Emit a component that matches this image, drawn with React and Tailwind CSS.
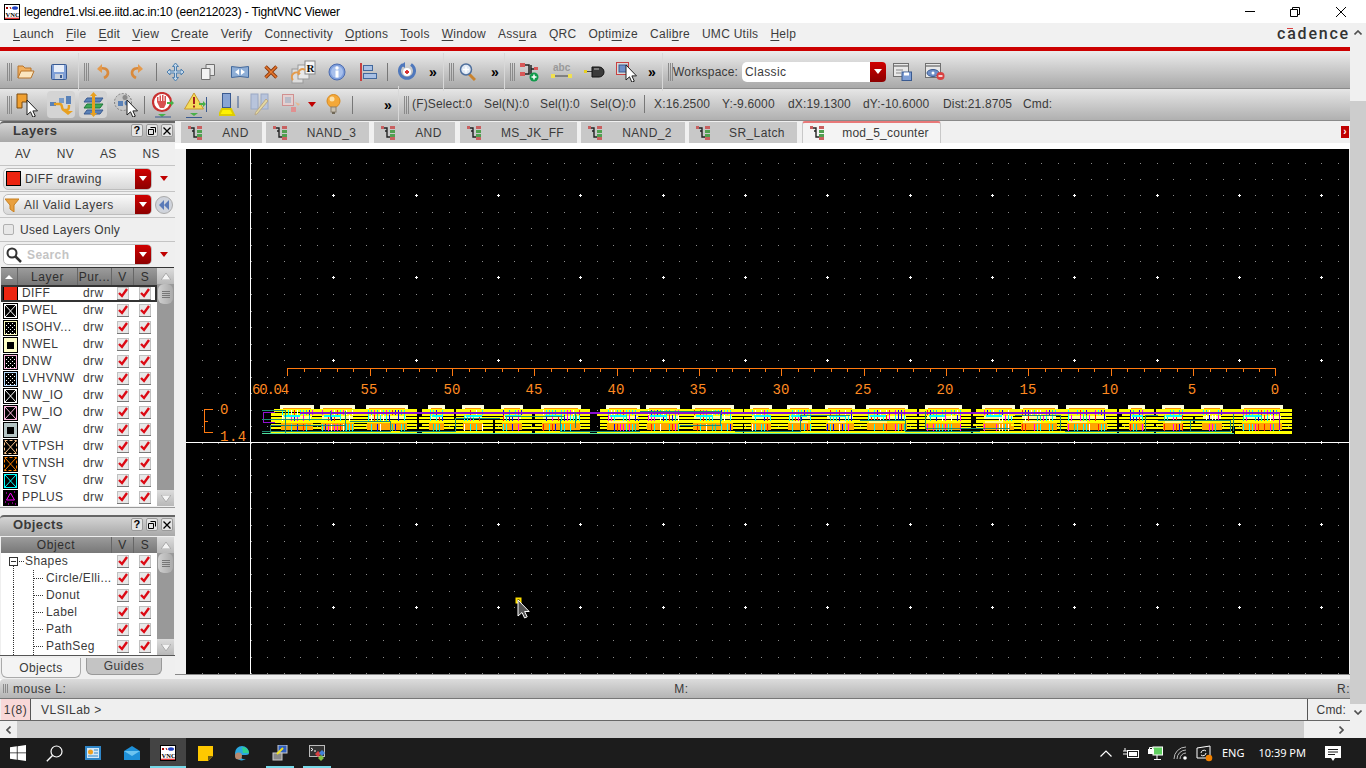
import React from "react";

const Svg = ({ w, h = 20, className = "", children }) => (
  <svg width={w} height={h} viewBox={`0 0 ${w} ${h}`} className={`shrink-0 ${className}`}>
    {children}
  </svg>
);

const Arrow = ({ x = 0, y = 0 }) => (
  <path transform={`translate(${x} ${y})`} d="M0 0v15l3.5-3.2 2.4 5.4 2.4-1-2.4-5.3h4.6z" fill="#fff" stroke="#222" strokeWidth="1" />
);

/* toolbar one */
const Folder = ({ className }) => (
  <Svg w={18} h={16} className={className}>
    <path d="M1 14V2h5l2 2h6v3" fill="#f0b060" stroke="#b8752c" />
    <path d="M1 14l3-7h13l-3 7z" fill="#fbe6c0" stroke="#b8752c" />
  </Svg>
);
const Save = ({ className }) => (
  <Svg w={16} h={16} className={className}>
    <rect x=".5" y=".5" width="15" height="15" rx="1" fill="#7f9fd6" stroke="#3a5a90" />
    <rect x="3" y="1" width="10" height="7" fill="#e8eef8" />
    <rect x="4" y="10" width="8" height="5" fill="#c8d0dc" />
    <rect x="9" y="11" width="2" height="3" fill="#3a5a90" />
  </Svg>
);
const Undo = ({ className, flip }) => (
  <Svg w={13} h={16} className={className}>
    <g transform={flip ? "translate(13 0) scale(-1 1)" : ""}>
      <path d="M2 5c5-2 9 0 9 4 0 2-2 4-4 5" fill="none" stroke="#d98a3c" strokeWidth="2.6" />
      <path d="M5 0v9L0 5z" fill="#e59a4c" />
    </g>
  </Svg>
);
const Move = ({ className }) => (
  <Svg w={19} h={20} className={className}>
    <path d="M9.5 1l3 3.5h-2V9h4.5V7l3 3-3 3v-2h-4.500v4.500h2l-3 3.500-3-3.500h2V11H4v2l-3-3 3-3v2h4.500V4.500h-2z" fill="#c4d8ea" stroke="#4d7fae" />
  </Svg>
);
const Copy = ({ className }) => (
  <Svg w={14} h={16} className={className}>
    <path d="M5 .5h8.500v11H5z" fill="#e6e6e6" stroke="#707070" />
    <path d="M.5 4.500H9v11H.5z" fill="#f2f2f2" stroke="#707070" />
  </Svg>
);
const Stretch = ({ className }) => (
  <Svg w={18} h={14} className={className}>
    <path d="M.5 1.500Q9 3.500 17.500 1.500v11Q9 10.500.5 12.500z" fill="#8eaed6" stroke="#42689c" />
    <path d="M8 4v6L4 7zM10 4v6l4-3z" fill="#fff" />
  </Svg>
);
const Del = ({ className }) => (
  <Svg w={14} h={14} className={className}>
    <path d="M1.500 1.500l11 11M12.500 1.500l-11 11" stroke="#8a3a10" strokeWidth="3.400" />
    <path d="M1.500 1.500l11 11M12.500 1.500l-11 11" stroke="#e8782c" strokeWidth="1.500" />
  </Svg>
);
const Prop = ({ className }) => (
  <Svg w={25} h={24} className={className}>
    <rect x="1" y="9" width="11" height="14" fill="#ddd" stroke="#999" />
    <rect x="7" y="5" width="11" height="14" fill="#e8e8e8" stroke="#999" />
    <rect x="14" y="1" width="10" height="13" fill="#f6f6f6" stroke="#888" />
    <text x="15.500" y="12" fontSize="11" fontWeight="700" fontFamily="Liberation Serif, serif" fill="#111">R</text>
    <path d="M2 20a4 4 0 017-6M8 15a4 4 0 016-5" fill="none" stroke="#e39a4a" strokeWidth="2" />
  </Svg>
);
const Info = ({ className }) => (
  <Svg w={18} h={18} className={className}>
    <circle cx="9" cy="9" r="8" fill="#7f9fdc" stroke="#4c6cb0" />
    <circle cx="9" cy="9" r="6" fill="#a8c0ec" />
    <rect x="7.500" y="7.500" width="3" height="7" fill="#fff" />
    <circle cx="9" cy="5" r="1.700" fill="#fff" />
  </Svg>
);
const Align = ({ className }) => (
  <Svg w={17} h={20} className={className}>
    <rect x="0" y="1" width="2" height="18" fill="#c84040" />
    <rect x="3.500" y="3.500" width="9" height="5" fill="#a8c0e4" stroke="#42689c" />
    <rect x="3.500" y="11.500" width="13" height="5" fill="#a8c0e4" stroke="#42689c" />
  </Svg>
);
const Refresh = ({ className }) => (
  <Svg w={18} h={19} className={className}>
    <path d="M5 2.500a7.500 7.500 0 108 0" fill="none" stroke="#4f78bc" strokeWidth="3" />
    <path d="M7 0v6L3 3z" fill="#4f78bc" />
    <circle cx="9" cy="10" r="4" fill="#fff" />
    <path d="M7 10h4M9 8v4" stroke="#d83030" strokeWidth="1.800" />
  </Svg>
);
const Zoom = ({ className }) => (
  <Svg w={17} h={19} className={className}>
    <path d="M10 12l6 6" stroke="#c9832e" strokeWidth="3" />
    <circle cx="7" cy="7.500" r="5.500" fill="#dfe8f4" stroke="#4f6f9c" strokeWidth="1.500" />
    <path d="M4 7.500h6M7 4.500v6" stroke="#fff" strokeWidth="1.500" />
  </Svg>
);
const CreateInst = ({ className }) => (
  <Svg w={20} h={20} className={className}>
    <rect x="1" y="1" width="5" height="4" fill="#d85858" />
    <rect x="1" y="10" width="5" height="4" fill="#d85858" />
    <path d="M6 3h4v9H6M10 3v9M12 3v9M12 7h4" fill="none" stroke="#222" strokeWidth="1.500" />
    <rect x="15" y="5" width="4" height="3" fill="#d85858" />
    <circle cx="15" cy="15" r="4.500" fill="#119b4c" />
    <path d="M12.500 15h5M15 12.500v5" stroke="#fff" strokeWidth="1.500" />
  </Svg>
);
const Abc = ({ className }) => (
  <Svg w={21} h={20} className={className}>
    <text x="2" y="9" fontSize="10" fontWeight="700" fontFamily="Liberation Sans, sans-serif" fill="#999">abc</text>
    <path d="M2 14h17" stroke="#444" />
    <rect x="0" y="12" width="4" height="4" fill="#f0e050" />
    <rect x="17" y="12" width="4" height="4" fill="#f0e050" />
  </Svg>
);
const Pin = ({ className }) => (
  <Svg w={21} h={12} className={className}>
    <rect x="0" y="4" width="3" height="3" fill="#e8d020" />
    <path d="M3 5.500h5" stroke="#444" />
    <path d="M8 1h7a5 5 0 010 10H8z" fill="#3a3a3a" stroke="#111" />
    <path d="M10 3h5" stroke="#bbb" />
  </Svg>
);
const SelectBox = ({ className }) => (
  <Svg w={21} h={20} className={className}>
    <rect x=".5" y=".5" width="12" height="12" fill="#d8d8d8" stroke="#c84040" />
    <rect x="3" y="3" width="8" height="7" fill="#6f8fc8" stroke="#3a5a90" />
    <Arrow x={10} y={3} />
  </Svg>
);
const WinSave = ({ className }) => (
  <Svg w={19} h={18} className={className}>
    <rect x=".5" y=".5" width="15" height="13" fill="#e8e8e8" stroke="#707070" />
    <path d="M1 3h14" stroke="#9a9a9a" strokeWidth="2" />
    <path d="M3 7h7M3 10h5" stroke="#888" />
    <rect x="9" y="9" width="9.500" height="8.500" fill="#7f9fd6" stroke="#3a5a90" />
    <rect x="11" y="9.500" width="5" height="3" fill="#fff" />
  </Svg>
);
const WinEye = ({ className }) => (
  <Svg w={20} h={18} className={className}>
    <rect x=".5" y=".5" width="15" height="14" fill="#e8e8e8" stroke="#707070" />
    <path d="M1 3h14" stroke="#9a9a9a" strokeWidth="2" />
    <ellipse cx="8" cy="10" rx="6" ry="3.500" fill="#6f8fc8" stroke="#3a5a90" />
    <circle cx="8" cy="10" r="1.500" fill="#fff" />
    <circle cx="15.500" cy="13" r="4" fill="#d84040" />
    <path d="M13.500 13h4" stroke="#fff" strokeWidth="1.500" />
  </Svg>
);

/* toolbar two */
const LShape = ({ className }) => (
  <Svg w={23} h={24} className={className}>
    <path d="M1 1h10v8h-5v6H1z" fill="#f0a030" stroke="#7a4a10" />
    <Arrow x={11} y={7} />
  </Svg>
);
const RouteIcon = ({ className }) => (
  <Svg w={23} h={22} className={className}>
    <rect x="0" y="8" width="6" height="4" fill="#5a82b8" />
    <rect x="16" y="2" width="5" height="8" fill="#5a82b8" />
    <rect x="9" y="4" width="5" height="5" fill="#7a9cc8" />
    <path d="M4 10h6c3 0 1 6 4 6h3c2 0 2-3 2-5" fill="none" stroke="#e8a020" strokeWidth="2.500" />
    <path d="M13 17l5 4 5-4z" fill="#e8a020" />
  </Svg>
);
const StackIcon = ({ className }) => (
  <Svg w={23} h={25} className={className}>
    <path d="M5 6h16l-3 4H2z" fill="#5a82b8" stroke="#3a5a90" />
    <path d="M5 12h16l-3 4H2z" fill="#3ea858" stroke="#1e7838" />
    <path d="M5 18h16l-3 4H2z" fill="#5a82b8" stroke="#3a5a90" />
    <path d="M11.500 0l3.500 4h-2v17h2l-3.500 4-3.500-4h2V4H8z" fill="#e8a020" />
  </Svg>
);
const GroupSel = ({ className }) => (
  <Svg w={25} h={24} className={className}>
    <circle cx="10" cy="9" r="8.500" fill="#c8c8c8" stroke="#808080" strokeDasharray="2 1.500" />
    <circle cx="12" cy="4.500" r="2.500" fill="#8a8a8a" />
    <rect x="5" y="8" width="5" height="5" fill="#5a82b8" />
    <circle cx="14" cy="10" r="2.500" fill="#5a82b8" />
    <Arrow x={14} y={7} />
  </Svg>
);
const StopIcon = ({ className }) => (
  <Svg w={23} h={26} className={className}>
    <circle cx="10" cy="10" r="9" fill="#fff" stroke="#c83030" strokeWidth="2.200" />
    <path d="M5 10V5h1.500v4h1V3.500H9V9h1V3h1.500v6h1V4H14v8l-2 4H8z" fill="#d85050" />
    <path d="M15 10h4V8l3 3-3 3v-2h-4z" fill="#48b048" />
    <path d="M6 22l4 3 4-3z" fill="#48b048" />
    <path d="M3 25h16" stroke="#3a5a90" />
  </Svg>
);
const WarnIcon = ({ className }) => (
  <Svg w={23} h={26} className={className}>
    <path d="M10 1l9.500 16H.5z" fill="#f4dc58" stroke="#c89830" />
    <path d="M10 5v7" stroke="#a02020" strokeWidth="2" />
    <rect x="9" y="13.500" width="2" height="2" fill="#a02020" />
    <path d="M15 11h4V9l3 3-3 3v-2h-4z" fill="#48b048" />
    <path d="M6 21l4 3 4-3z" fill="#48b048" />
    <path d="M2 25.500h16" stroke="#3a5a90" />
    <path d="M22.500 5v15" stroke="#3a5a90" />
  </Svg>
);
const RulerIcon = ({ className }) => (
  <Svg w={20} h={23} className={className}>
    <rect x="3.500" y=".5" width="8" height="14" fill="#88a4d4" stroke="#3a5a90" />
    <path d="M3 16h9l3 6H0z" fill="#fff200" stroke="#ddcc00" strokeWidth="2" />
    <path d="M19 3v12" stroke="#3a5a90" />
  </Svg>
);
const FadedPencil = ({ className }) => (
  <Svg w={20} h={23} className={className}>
    <rect x="1" y="1" width="7" height="15" fill="#b8c4dc" stroke="#9aa8c4" />
    <rect x="11" y="1" width="7" height="15" fill="#b8c4dc" stroke="#9aa8c4" />
    <path d="M18 8L7 21l-2 1 .5-2.500L16 6z" fill="#e4d8a0" stroke="#b8a888" />
  </Svg>
);
const FadedRed = ({ className }) => (
  <Svg w={20} h={22} className={className}>
    <rect x=".5" y=".5" width="11" height="11" fill="#e4d0d0" stroke="#d09090" />
    <rect x="3" y="3" width="6" height="6" fill="#b8bcc8" />
    <rect x="9" y="13" width="5" height="5" fill="#e09090" />
    <path d="M13 8l5 2-2 2z" fill="#e8b890" />
  </Svg>
);
const Bulb = ({ className }) => (
  <Svg w={15} h={22} className={className}>
    <circle cx="7.500" cy="7" r="6.500" fill="#f4a838" stroke="#d88a20" />
    <circle cx="6" cy="5" r="2.500" fill="#fce0a8" />
    <rect x="5" y="13" width="5" height="5" fill="#c8c0b0" stroke="#8a8070" />
    <rect x="6" y="18" width="3" height="2" fill="#706858" />
  </Svg>
);

const Tri = ({ className = "", color = "#c00000" }) => (
  <Svg w={8} h={5} className={className}>
    <path d="M0 0h8L4 5z" fill={color} />
  </Svg>
);

const Grip = ({ className = "", groove }) => (
  <div className={`relative flex gap-[1px] h-[18px] shrink-0 ${className}`}>
    {groove && <div className="absolute -left-[6px] -top-[10px] -bottom-[10px] w-[1px] bg-[#d8d8d8]" />}
    <div className="w-[1px] bg-[#8a8a8a]" />
    <div className="w-[1px] bg-[#8a8a8a]" />
    <div className="w-[1px] bg-[#8a8a8a]" />
  </div>
);

const Sep = ({ className = "" }) => <div className={`w-[1px] h-[18px] shrink-0 bg-[#777] ${className}`} />;
const More = ({ className = "" }) => (
  <span className={`text-[14px] leading-none font-bold text-black shrink-0 ${className}`}>»</span>
);

const RedDrop = () => (
  <div className="flex items-center justify-center w-[16px] self-stretch shrink-0 rounded-r-[4px] bg-linear-to-b from-[#d00000] to-[#8c0000]">
    <Tri color="#fff" />
  </div>
);

const U = ({ children }) => <span className="underline underline-offset-2">{children}</span>;

const menus = [
  [<U key="u">L</U>, "aunch"],
  [<U key="u">F</U>, "ile"],
  [<U key="u">E</U>, "dit"],
  [<U key="u">V</U>, "iew"],
  [<U key="u">C</U>, "reate"],
  ["Veri", <U key="u">f</U>, "y"],
  ["Co", <U key="u">n</U>, "nectivity"],
  [<U key="u">O</U>, "ptions"],
  [<U key="u">T</U>, "ools"],
  [<U key="u">W</U>, "indow"],
  ["Ass", <U key="u">u</U>, "ra"],
  ["QRC"],
  ["Opti", <U key="u">m</U>, "ize"],
  ["Cali", <U key="u">b</U>, "re"],
  ["UMC Utils"],
  [<U key="u">H</U>, "elp"],
];

/* layer swatches */
const Swatch = ({ kind, color, cross }) => {
  const dots = [];
  if (kind === "dots") {
    for (let y = 3; y < 14; y += 2) {
      for (let x = y % 4 === 1 ? 3 : 5; x < 13; x += 4) {
        dots.push(<rect key={`${x}-${y}`} x={x} y={y} width="1" height="1" fill="#fff" />);
      }
    }
  }
  if (kind === "solid") {
    return (
      <Svg w={15} h={16}>
        <rect x=".5" y=".5" width="14" height="15" fill="#ec2410" stroke="#000" />
      </Svg>
    );
  }
  if (kind === "pplus") {
    return (
      <Svg w={15} h={16}>
        <rect width="15" height="16" fill="#000" />
        <path d="M7.500 3l4 7h-8z" fill="none" stroke="#f0f" />
        <path d="M2 12h1M5 14h1M9 13h1M12 14h1M3 3h1M11 2h1" stroke="#f0f" />
      </Svg>
    );
  }
  return (
    <Svg w={15} h={16}>
      <rect width="15" height="16" fill="#000" />
      <rect x="1.500" y="1.500" width="12" height="13" fill="#000" stroke={color} strokeDasharray={kind === "dash" ? "3 2" : undefined} />
      {kind === "block" && <rect x="1" y="1" width="13" height="14" fill={color} />}
      {kind === "block" && <rect x="4" y="5" width="7" height="7" fill="#000" />}
      {(kind === "x" || kind === "dash") && <path d="M2 2l11 12M13 2L2 14" stroke={cross || color} />}
      {dots}
    </Svg>
  );
};

const Check = () => (
  <Svg w={12} h={13}>
    <rect x=".5" y=".5" width="11" height="12" fill="#e8e8e8" stroke="#c0c0c0" />
    <path d="M0 12.500h12" stroke="#777" />
    <path d="M2 6l3 3 5-7" fill="none" stroke="#dc0a14" strokeWidth="2.400" />
  </Svg>
);

const layers = [
  ["DIFF", { kind: "solid" }],
  ["PWEL", { kind: "x", color: "#fff" }],
  ["ISOHV...", { kind: "dots", color: "#ffffc0" }],
  ["NWEL", { kind: "block", color: "#ffffc8" }],
  ["DNW", { kind: "dots", color: "#ffb8e0" }],
  ["LVHVNW", { kind: "dots", color: "#b8dcff" }],
  ["NW_IO", { kind: "x", color: "#fff" }],
  ["PW_IO", { kind: "x", color: "#ffb8e0" }],
  ["AW", { kind: "block", color: "#b4c4c4" }],
  ["VTPSH", { kind: "dash", color: "#ffc890" }],
  ["VTNSH", { kind: "dash", color: "#ff8000" }],
  ["TSV", { kind: "x", color: "#00ffff" }],
  ["PPLUS", { kind: "pplus" }],
];

const Tree = ({ top }) => (
  <Svg w={45} h={17}>
    {top ? (
      <>
        <rect x="8.500" y="4.500" width="8" height="8" fill="#fff" stroke="#333" />
        <path d="M10 8.500h5" stroke="#333" />
        <path d="M18 8.500h6M12.500 13v4M32.500 13v4" stroke="#333" strokeDasharray="1 1" />
      </>
    ) : (
      <path d="M12.500 0v17M32.500 0v17M33 8.500h10" stroke="#333" strokeDasharray="1 1" />
    )}
  </Svg>
);

const TitleBtn = ({ children }) => (
  <div className="flex items-center justify-center w-[12px] h-[13px] rounded-[2px] bg-[#e4e4e4] border border-[#9a9a9a] text-[11px] leading-none font-bold text-black">
    {children}
  </div>
);

const DockTitle = ({ label, className = "" }) => (
  <div className={`flex items-center h-[21px] pl-[13px] pr-[2px] pb-[4px] rounded-tl-[4px] border-t-2 border-[#666] bg-linear-to-b from-[#d4d4d4] to-[#a8a8a8] ${className}`}>
    <span className="text-[13px] font-bold text-[#3a3a3a] flex-1">{label}</span>
    <div className="flex gap-[3px]">
      <TitleBtn>?</TitleBtn>
      <TitleBtn>
        <Svg w={8} h={8}>
          <path d="M2.500.5h5v5M.5 2.500h5v5h-5z" fill="none" stroke="#000" />
        </Svg>
      </TitleBtn>
      <TitleBtn>
        <Svg w={8} h={8}>
          <path d="M.5.5l7 7M7.500.5l-7 7" stroke="#000" strokeWidth="1.300" />
        </Svg>
      </TitleBtn>
    </div>
  </div>
);

const ScrollBtn = ({ down }) => (
  <div className="flex items-center justify-center h-[16px] shrink-0 bg-linear-to-b from-[#dcdcdc] to-[#b8b8b8]">
    <Svg w={10} h={7}>
      <path d={down ? "M0 0h10L5 7z" : "M5 0l5 7H0z"} fill="#f4f4f4" stroke="#aaa" />
    </Svg>
  </div>
);

const TableScroll = () => (
  <div className="flex flex-col w-[17px] shrink-0 bg-[#999]">
    <ScrollBtn />
    <div className="flex flex-col items-center justify-center gap-[1px] h-[20px] mx-[1px] rounded-[6px] bg-linear-to-r from-[#d0d0d0] to-[#aaa]">
      <div className="w-[8px] h-[1px] bg-[#777]" />
      <div className="w-[8px] h-[1px] bg-[#777]" />
      <div className="w-[8px] h-[1px] bg-[#777]" />
      <div className="w-[8px] h-[1px] bg-[#777]" />
    </div>
    <div className="flex-1" />
    <ScrollBtn down />
  </div>
);

const HeadCell = ({ className, children }) => (
  <div className={`flex items-center justify-center h-full border-r border-[#666] text-[12px] text-[#2e2e2e] ${className}`}>{children}</div>
);

const Combo = ({ className = "", children }) => (
  <div className={`flex items-center h-[21px] rounded-[5px] bg-linear-to-b from-[#fafafa] to-[#d8d8d8] border border-[#bdbdbd] ${className}`}>
    {children}
    <RedDrop />
  </div>
);

const Panel = () => (
  <div className="flex flex-col w-[175px] shrink-0 text-[#3a3a3a] bg-[#efefef] tracking-[0.4px]">
    <DockTitle label="Layers" />
    <div className="flex items-center justify-between h-[24px] px-[15px] text-[12px] border-b border-[#c4c4c4]">
      <span>AV</span>
      <span>NV</span>
      <span>AS</span>
      <span>NS</span>
    </div>
    <div className="flex items-center h-[26px] pl-[3px] border-b border-[#c4c4c4]">
      <Combo className="w-[149px] !h-[22px]">
        <div className="ml-[2px] w-[15px] h-[15px] bg-[#ec2410] border border-black shrink-0" />
        <span className="ml-[4px] flex-1 text-[12px] text-[#3a3a3a]">DIFF drawing</span>
      </Combo>
      <Tri className="ml-[8px]" />
    </div>
    <div className="flex items-center h-[26px] pl-[3px] border-b border-[#c4c4c4]">
      <Combo className="w-[149px]">
        <Svg w={14} h={14} className="ml-[1px]">
          <path d="M0 1h14L9 7v7L5 11V7z" fill="#e8a040" stroke="#c88020" />
        </Svg>
        <span className="ml-[5px] flex-1 text-[12px] tracking-[0.5px]">All Valid Layers</span>
      </Combo>
      <div className="flex items-center justify-center ml-[3px] w-[18px] h-[18px] rounded-full bg-[#d0d4dc] border border-[#aaa]">
        <Svg w={10} h={10}>
          <path d="M5 0v10L0 5zM10 0v10L5 5z" fill="#5a7ab8" />
        </Svg>
      </div>
    </div>
    <div className="flex items-center h-[24px] pl-[3px] border-b border-[#c4c4c4]">
      <div className="w-[11px] h-[11px] rounded-[2px] bg-[#e8e8e8] border border-[#b0b0b0]" />
      <span className="ml-[6px] text-[12px] tracking-[0.3px]">Used Layers Only</span>
    </div>
    <div className="flex items-center h-[25px] pl-[3px]">
      <Combo className="w-[149px] bg-none bg-white">
        <Svg w={16} h={16} className="ml-[2px]">
          <circle cx="6" cy="6" r="4.500" fill="#fff" stroke="#333" strokeWidth="2" />
          <path d="M9 9l6 6" stroke="#333" strokeWidth="2.500" />
        </Svg>
        <span className="ml-[5px] flex-1 text-[12px] font-bold text-[#c4c4c4]">Search</span>
      </Combo>
      <Tri className="ml-[8px]" />
    </div>

    <div className="mx-[1px] flex border-t border-[#333] bg-white">
      <div className="flex flex-col w-[156px]">
        <div className="flex items-center h-[17px] bg-linear-to-b from-[#9c9c9c] to-[#787878] tracking-[0.6px]">
          <HeadCell className="w-[17px]">
            <Svg w={8} h={4}>
              <path d="M4 0l4 4H0z" fill="#fff" />
            </Svg>
          </HeadCell>
          <HeadCell className="w-[60px]">Layer</HeadCell>
          <HeadCell className="w-[34px]">Pur...</HeadCell>
          <HeadCell className="w-[22px]">V</HeadCell>
          <HeadCell className="w-[22px] border-r-0">S</HeadCell>
        </div>
        {layers.map(([name, sw], i) => (
          <div key={name} className={`flex items-center h-[17px] text-[12px] ${i === 0 ? "outline-2 -outline-offset-2 outline-[#333]" : ""}`}>
            <div className="ml-[2px] w-[15px]">
              <Swatch {...sw} />
            </div>
            <span className="ml-[4px] w-[61px] mb-[2px]">{name}</span>
            <span className="w-[34px] mb-[2px]">drw</span>
            <Check />
            <div className="ml-[10px]">
              <Check />
            </div>
          </div>
        ))}
      </div>
      <TableScroll />
    </div>
    <div className="h-[8px] mt-[1px] border-t border-[#999]" />

    <DockTitle label="Objects" />
    <div className="mx-[1px] mt-[1px] flex bg-white">
      <div className="flex flex-col w-[156px]">
        <div className="flex items-center h-[16px] bg-linear-to-b from-[#9c9c9c] to-[#787878] tracking-[0.6px]">
          <HeadCell className="w-[111px]">Object</HeadCell>
          <HeadCell className="w-[22px]">V</HeadCell>
          <HeadCell className="w-[22px] border-r-0">S</HeadCell>
        </div>
        {["Shapes", "Circle/Elli...", "Donut", "Label", "Path", "PathSeg"].map((name, i) => (
          <div key={name} className="flex items-center h-[17px] text-[12px]">
            {i === 0 ? (
              <>
                <div className="w-[24px] overflow-hidden">
                  <Tree top />
                </div>
                <span className="w-[92px] mb-[2px]">{name}</span>
              </>
            ) : (
              <>
                <Tree />
                <span className="w-[71px] mb-[2px] whitespace-nowrap overflow-hidden">{name}</span>
              </>
            )}
            <Check />
            <div className="ml-[10px]">
              <Check />
            </div>
          </div>
        ))}
      </div>
      <TableScroll />
    </div>
    <div className="flex h-[24px] pl-[1px] pt-[2px] text-[12px] border-t border-[#555]">
      <div className="flex items-center justify-center w-[80px] h-[20px] rounded-b-[6px] bg-[#f4f4f4] border border-t-0 border-[#aaa]">Objects</div>
      <div className="flex items-center justify-center ml-[5px] w-[76px] h-[17px] rounded-b-[6px] bg-[#c4c4c4] border border-t-0 border-[#999]">Guides</div>
    </div>
  </div>
);

const tabs = [
  { name: "AND", w: "w-[81px]", gap: "mr-[4px]" },
  { name: "NAND_3", w: "w-[103px]", gap: "mr-[5px]" },
  { name: "AND", w: "w-[81px]", gap: "mr-[5px]" },
  { name: "MS_JK_FF", w: "w-[117px]", gap: "mr-[4px]" },
  { name: "NAND_2", w: "w-[104px]", gap: "mr-[4px]" },
  { name: "SR_Latch", w: "w-[108px]", gap: "mr-[5px]" },
];

const TabGlyph = () => (
  <Svg w={14} h={14} className="ml-[7px]">
    <path d="M2 2h4v9h4M4 5h2M6 2v9" fill="none" stroke="#222" strokeWidth="1.400" />
    <rect x="0" y="0" width="3" height="3" fill="#c86060" />
    <rect x="9" y="0" width="5" height="3" fill="#c86060" />
    <rect x="9" y="4" width="5" height="3" fill="#50a050" />
    <rect x="9" y="8" width="5" height="3" fill="#50a050" />
    <rect x="9" y="11" width="5" height="3" fill="#c86060" />
  </Svg>
);

/* the layout strip is dense enough that a seeded generator is the sane way to draw it */
const cells = [
  [280, 314], [320, 355], [366, 408], [428, 445], [462, 484], [501, 523], [541, 581], [606, 640], [646, 680],
  [692, 734], [750, 772], [787, 812], [825, 855], [866, 908], [925, 962], [982, 1015], [1020, 1058],
  [1066, 1108], [1128, 1145], [1162, 1184], [1201, 1223], [1241, 1283],
];

const buildStrip = () => {
  let s = 4711;
  const rnd = () => (s = (s * 16807) % 2147483647) / 2147483647;
  const out = [];
  const add = (x, y, w, h, f) => out.push({ x, y, w, h, f });
  const bits = ["#00ffff", "#00ffff", "#ff00ff", "#0000ff", "#ffffff", "#ff2000", "#00e0c0"];
  cells.forEach(([a, b]) => {
    add(a, 405, b - a, 4, "#ffffd8");
    add(a + 3, 408, b - a - 6, 1, "#ff9000");
    [[409, 3], [413, 3], [417, 2], [420, 3], [424, 2], [427, 2], [431, 3]].forEach(([y, h]) => {
      const skew = rnd() < 0.5 ? 3 : 0;
      add(a - 9 + skew, y, b - a + 18 - skew, h, "#ffff00");
    });
    add(a + 1, 423, b - a - 2, 7, "#ffa500");
    add(a + 2, 416, b - a - 4, 3, "#ffffa0");
    for (let x = a + 2; x < b - 1; x += 3) {
      if (rnd() < 0.8) add(x, 410, 1, 5, bits[Math.floor(rnd() * bits.length)]);
      if (rnd() < 0.7) add(x, 415, 1, 6, bits[Math.floor(rnd() * bits.length)]);
      if (rnd() < 0.7) add(x, 424, 1, 7, bits[Math.floor(rnd() * bits.length)]);
    }
    if (rnd() < 0.8) add(a + 4, 415, Math.min(16, b - a - 6), 2, "#00ffff");
    if (rnd() < 0.5) add(a + 3, 421, Math.min(18, b - a - 6), 2, "#ffff80");
  });
  return out;
};
const strip = buildStrip();

const teal = [
  "M262 410H285V433M262 419H330V411M270 433V425H345M345 411V431M350 421H390V431H262",
  "M400 431H455V418H500M505 416H565M560 420V431H640M575 412V428M640 411H720V425H680",
  "M735 431H800V415H850M860 420H905V431H980M925 411V428H1010M1015 415H1060V431",
  "M1065 431H1145V415H1158M1158 420H1190V431M1190 420H1230V431H1066M1233 414V431",
];

const minorDots = () => {
  let d = "";
  for (let i = -4; i < 71; i++) {
    const x = Math.round(251 + i * 16.467);
    for (let j = -18; j < 15; j++) {
      const y = Math.round(442.5 + j * 16.467);
      d += `M${x} ${y}h1v1h-1z`;
    }
  }
  return d;
};
const minor = minorDots();

const majorDots = () => {
  let d = "";
  for (let i = 0; i < 13; i++) {
    const x = Math.round(333.3 + i * 82.33);
    for (let j = -3; j < 3; j++) {
      const y = Math.round(442 + j * 82.3);
      d += `M${x - 1} ${y}h3v1h-3zM${x} ${y - 1}h1v3h-1z`;
    }
  }
  return d;
};
const major = majorDots();

const rulerPath = () => {
  let d = "M287.500 376V368.500H1275.500V376";
  for (let i = 1; i <= 60; i++) {
    const x = Math.round(1275.5 - i * 16.467) + 0.5;
    d += `M${x} 368.500V${i % 5 === 0 ? 376 : 372}`;
  }
  return d;
};
const ruler = rulerPath();

const labels = [["55", 369], ["50", 452], ["45", 534], ["40", 616], ["35", 698], ["30", 781], ["25", 863], ["20", 945], ["15", 1028], ["10", 1110], ["5", 1192], ["0", 1275]];

const Canvas = () => (
  <svg width="1163" height="525" viewBox="186 149 1163 525" className="block shrink-0 bg-black">
    <path d={minor} fill="#8c8c8c" shapeRendering="crispEdges" />
    <path d={major} fill="#fff" shapeRendering="crispEdges" />
    <path d="M250.500 149V674M186 442.500H1349" stroke="#fff" shapeRendering="crispEdges" />
    <path d={ruler} fill="none" stroke="#ff7a10" shapeRendering="crispEdges" />
    <path d="M213 409.500H204.500V432.500H213M204 421H208" fill="none" stroke="#ff7a10" shapeRendering="crispEdges" />
    <g fill="#ff8a20" fontFamily="Liberation Mono, monospace" fontSize="14">
      <text x="252" y="394" letterSpacing="-1.200">60.04</text>
      {labels.map(([t, x]) => (
        <text key={x} x={x} y="394" textAnchor="middle">{t}</text>
      ))}
      <text x="220" y="414">0</text>
      <text x="220" y="441" letterSpacing="0.5">1.4</text>
    </g>
    <g shapeRendering="crispEdges">
      {strip.map((r, i) => (
        <rect key={i} x={r.x} y={r.y} width={r.w} height={r.h} fill={r.f} />
      ))}
      <rect x="300" y="412" width="980" height="2" fill="#8a10d0" />
      <rect x="262" y="433" width="972" height="1" fill="#50e0a0" />
      <path d="M275 412.500H263.500V422.500H275M1279.500 412V430" fill="none" stroke="#9010d0" />
      <path d={teal.join("")} fill="none" stroke="#1e8a70" />
    </g>
    <rect x="516.500" y="598.500" width="4" height="4" fill="none" stroke="#ffe000" strokeWidth="2" />
    <path d="M518 600v16l4-3.500 2.600 5.500 2.600-1.200-2.600-5.300h4.600z" fill="#555" stroke="#fff" />
  </svg>
);

const VncIcon = ({ size = 16 }) => (
  <svg width={size} height={size} viewBox="0 0 16 16" className="shrink-0">
    <rect x=".5" y=".5" width="15" height="15" fill="#fff" stroke="#000" />
    <path d="M2 3l2 2M4 3L2 5M6 3l1 2" stroke="#a00000" />
    <ellipse cx="11" cy="4" rx="3" ry="1.800" fill="#2040c0" />
    <text x="1.500" y="12.500" fontSize="6.500" fontWeight="700" fontFamily="Liberation Serif, serif" fill="#000">VNC</text>
    <path d="M1 14.300h14" stroke="#e02020" strokeWidth="1.200" />
  </svg>
);

const Taskbar = () => (
  <div className="flex items-center h-[30px] shrink-0 bg-[#1c1c1c]">
    <svg width="16" height="16" viewBox="0 0 16 16" className="ml-[10px] shrink-0">
      <path d="M0 2.200l6.800-.9v6.200H0zM7.600 1.200L16 0v7.500H7.600zM0 8.300h6.800v6.400L0 13.800zM7.600 8.300H16V16l-8.400-1.200z" fill="#fff" />
    </svg>
    <svg width="17" height="17" viewBox="0 0 17 17" className="ml-[20px] shrink-0">
      <circle cx="10.500" cy="6.500" r="5.500" fill="none" stroke="#fff" strokeWidth="1.200" />
      <path d="M6.500 10.500L.8 16.200" stroke="#fff" strokeWidth="1.400" />
    </svg>
    <svg width="16" height="14" viewBox="0 0 16 14" className="ml-[22px] shrink-0">
      <rect width="16" height="14" fill="#2f86c8" />
      <rect x="2" y="2" width="12" height="10" fill="#d4e8f8" />
      <circle cx="5.500" cy="6" r="2.500" fill="#f0a020" />
      <path d="M9 4h4M9 7h4M3 10h10" stroke="#2f86c8" />
    </svg>
    <svg width="16" height="14" viewBox="0 0 16 14" className="ml-[23px] shrink-0">
      <path d="M0 5l8-5 8 5v9H0z" fill="#1e90d8" />
      <path d="M0 5l8 5 8-5" fill="#6cc4f0" />
    </svg>
    <div className="relative flex items-center justify-center ml-[10px] w-[36px] h-full bg-[#444]">
      <VncIcon />
      <div className="absolute bottom-0 inset-x-0 h-[2px] bg-[#76d8e8]" />
    </div>
    <svg width="15" height="15" viewBox="0 0 15 15" className="ml-[12px] shrink-0">
      <path d="M0 0h15v10l-5 5H0z" fill="#ffc800" />
      <path d="M10 15v-5h5z" fill="#705a10" />
    </svg>
    <svg width="16" height="16" viewBox="0 0 16 16" className="ml-[21px] shrink-0">
      <path d="M1 8a7 7 0 0114 0c0 1-1 2-3 2H6c0 3 3 5 6 4-6 4-11-1-11-6z" fill="#2aa8e0" />
      <path d="M8 2c4 0 7 3 7 6H9z" fill="#30d090" />
      <circle cx="4.500" cy="11" r="3.500" fill="#b88a70" />
    </svg>
    <div className="relative flex items-center justify-center ml-[16px] w-[28px] h-full">
      <svg width="16" height="16" viewBox="0 0 16 16">
        <rect x="6" y="0" width="9" height="8" fill="#3060c0" stroke="#ccc" />
        <rect x="1" y="8" width="9" height="7" fill="#888" stroke="#ccc" />
        <path d="M5 9l6-6" stroke="#f0e020" strokeWidth="2" />
      </svg>
      <div className="absolute bottom-0 inset-x-0 h-[2px] bg-[#76d8e8]" />
    </div>
    <div className="relative flex items-center justify-center ml-[9px] w-[28px] h-full">
      <svg width="16" height="16" viewBox="0 0 16 16">
        <rect x=".5" y=".5" width="15" height="11" fill="#333" stroke="#bbb" />
        <path d="M2 3l2 1.500L2 6M5 6h2" stroke="#fff" fill="none" />
        <path d="M6 9l3-3 3 3-3 3z" fill="#d84040" />
        <path d="M10 8l3-3 3 3-3 3z" fill="#4080d8" />
        <path d="M9 13l3-3 3 3-3 3z" fill="#80c040" />
      </svg>
      <div className="absolute bottom-0 inset-x-0 h-[2px] bg-[#76d8e8]" />
    </div>

    <div className="flex-1" />
    <svg width="12" height="7" viewBox="0 0 12 7" className="shrink-0">
      <path d="M.5 6.500L6 1l5.500 5.500" fill="none" stroke="#fff" strokeWidth="1.200" />
    </svg>
    <svg width="16" height="11" viewBox="0 0 16 11" className="ml-[11px] shrink-0">
      <rect x="4.500" y="2.500" width="11" height="7" fill="none" stroke="#fff" />
      <rect x="6" y="4" width="8" height="4" fill="#fff" />
      <path d="M0 3h4M0 6h4M2 0v3" stroke="#fff" />
    </svg>
    <svg width="15" height="14" viewBox="0 0 15 14" className="ml-[9px] shrink-0">
      <rect x="5" y="1" width="9.500" height="8" fill="#60d060" stroke="#fff" />
      <rect x="0" y="3" width="6" height="5" fill="#fff" />
      <path d="M1.500 3V1.500h3V3" fill="none" stroke="#fff" />
      <path d="M9 9v4M6 13.500h7" stroke="#fff" />
    </svg>
    <svg width="15" height="14" viewBox="0 0 15 14" className="ml-[10px] shrink-0">
      <path d="M1 13A12 12 0 0113 1M4 13a9 9 0 019-9M7 13a6 6 0 016-6" fill="none" stroke="#bbb" />
      <circle cx="12" cy="12" r="1.800" fill="#fff" />
    </svg>
    <svg width="17" height="17" viewBox="0 0 17 17" className="ml-[8px] shrink-0">
      <path d="M1 3l13-2v12H1z" fill="#1c1c1c" stroke="#fff" />
      <path d="M5 8a3 3 0 015-2M10 8a3 3 0 01-5 2" fill="none" stroke="#fff" />
      <circle cx="13" cy="13" r="3.300" fill="#f08000" />
    </svg>
    <span className="ml-[9px] text-[11px] text-white [font-family:'Noto_Sans',sans-serif]">ENG</span>
    <span className="ml-[14px] text-[11px] text-white [font-family:'Noto_Sans',sans-serif]">10:39 PM</span>
    <svg width="16" height="15" viewBox="0 0 16 15" className="ml-[19px] mr-[25px] shrink-0">
      <path d="M0 0h16v12h-6l-2 3-2-3H0z" fill="#fff" />
      <path d="M3 3.500h10M3 6h10M3 8.500h7" stroke="#1c1c1c" />
    </svg>
  </div>
);

export default function App() {
  return (
    <div className="flex flex-col w-[1366px] h-[768px] overflow-hidden bg-white text-[#3a3a3a] [font-family:'Liberation_Sans',sans-serif]">
      {/* window title */}
      <div className="flex items-center h-[23px] shrink-0 bg-white pl-[4px] text-black">
        <VncIcon />
        <span className="ml-[4px] text-[12px] tracking-[-0.2px] flex-1">
          legendre1.vlsi.ee.iitd.ac.in:10 (een212023) - TightVNC Viewer
        </span>
        <div className="w-[10px] h-[1px] bg-black mr-[35px]" />
        <Svg w={10} h={10} className="mr-[36px]">
          <path d="M2.500 2.500V.5h7v7h-2M.5 2.500h7v7h-7z" fill="none" stroke="#000" />
        </Svg>
        <Svg w={10} h={10} className="mr-[20px]">
          <path d="M0 0l10 10M10 0L0 10" stroke="#000" />
        </Svg>
      </div>

      <div className="flex flex-1 min-h-0">
        <div className="flex flex-col w-[1350px] shrink-0">
          {/* menu bar */}
          <div className="flex items-center h-[24px] shrink-0 pl-[13px] pb-[2px] bg-[#f1f1f1]">
            <div className="flex gap-[12px] text-[12px] tracking-[0.27px] text-[#3c3c3c]">
              {menus.map((m, i) => (
                <span key={i}>{m}</span>
              ))}
            </div>
            <div className="flex-1" />
            <span className="relative text-[16px] leading-none font-medium tracking-[1.8px] text-[#333] [font-family:'Roboto',sans-serif]">
              cadence
              <span className="absolute left-[10px] top-[2px] w-[6px] h-[1px] bg-[#d84040]" />
            </span>
          </div>
          <div className="h-[4px] shrink-0 bg-[#cc0000]" />

          {/* toolbar one */}
          <div className="flex items-center h-[38px] shrink-0 pt-[4px] border-b border-[#8a8a8a] bg-linear-to-b from-[#ececec] to-[#a9a9a9]">
            <Grip className="ml-[7px]" />
            <Folder className="ml-[5px]" />
            <Save className="ml-[16px]" />
            <Grip className="ml-[17px]" groove />
            <Undo className="ml-[8px]" />
            <Undo className="ml-[20px]" flip />
            <Sep className="ml-[13px]" />
            <Move className="ml-[9px]" />
            <Copy className="ml-[16px]" />
            <Stretch className="ml-[16px]" />
            <Del className="ml-[15px]" />
            <Prop className="ml-[13px]" />
            <Info className="ml-[12px]" />
            <Align className="ml-[14px]" />
            <Sep className="ml-[10px]" />
            <Refresh className="ml-[10px]" />
            <More className="ml-[13px] w-[8px]" />
            <Grip className="ml-[12px]" groove />
            <Zoom className="ml-[5px]" />
            <More className="ml-[15px] w-[8px]" />
            <Grip className="ml-[11px]" groove />
            <CreateInst className="ml-[4px]" />
            <Abc className="ml-[12px]" />
            <Pin className="ml-[12px]" />
            <SelectBox className="ml-[11px]" />
            <More className="ml-[11px] w-[9px]" />
            <Grip className="ml-[11px]" groove />
            <span className="w-[65px] text-[12px] tracking-[0.2px] whitespace-nowrap">Workspace:</span>
            <div className="flex items-center ml-[4px] w-[144px] h-[20px] rounded-[5px] bg-white">
              <span className="flex-1 pl-[3px] text-[12px] tracking-[0.4px]">Classic</span>
              <RedDrop />
            </div>
            <WinSave className="ml-[7px]" />
            <WinEye className="ml-[13px]" />
          </div>

          {/* toolbar two */}
          <div className="flex items-center h-[32px] shrink-0 border-b border-[#8a8a8a] bg-linear-to-b from-[#e6e6e6] to-[#b0b0b0] text-[12px] tracking-[0.15px]">
            <Grip className="ml-[7px]" />
            <LShape className="ml-[4px]" />
            <div className="flex items-center justify-center ml-[8px] w-[28px] h-[27px] rounded-[4px] bg-[#d4d4d4]">
              <RouteIcon />
            </div>
            <div className="flex items-center justify-center ml-[4px] w-[28px] h-[27px] rounded-[4px] bg-[#d4d4d4]">
              <StackIcon />
            </div>
            <GroupSel className="ml-[6px]" />
            <Sep className="ml-[6px]" />
            <StopIcon className="ml-[7px]" />
            <WarnIcon className="ml-[9px]" />
            <RulerIcon className="ml-[12px]" />
            <FadedPencil className="ml-[11px]" />
            <FadedRed className="ml-[12px]" />
            <Tri className="ml-[6px]" />
            <Bulb className="ml-[10px]" />
            <Sep className="ml-[11px]" />
            <More className="ml-[31px] w-[8px]" />
            <Grip className="ml-[12px]" groove />
            <div className="flex items-center mb-[2px]">
              <span className="ml-[3px] w-[72px] whitespace-nowrap">(F)Select:0</span>
              <span className="w-[56px] whitespace-nowrap">Sel(N):0</span>
              <span className="w-[50px] whitespace-nowrap">Sel(I):0</span>
              <span className="w-[54px] whitespace-nowrap">Sel(O):0</span>
              <Sep />
              <span className="ml-[9px] w-[68px] whitespace-nowrap">X:16.2500</span>
              <span className="w-[66px] whitespace-nowrap">Y:-9.6000</span>
              <span className="w-[75px] whitespace-nowrap">dX:19.1300</span>
              <span className="w-[80px] whitespace-nowrap">dY:-10.6000</span>
              <span className="w-[80px] whitespace-nowrap">Dist:21.8705</span>
              <span>Cmd:</span>
            </div>
          </div>

          {/* dock and canvas */}
          <div className="flex flex-1 min-h-0">
            <Panel />
            <div className="flex flex-col flex-1 min-w-0 bg-[#f0f0f0]">
              <div className="flex items-end h-[22px] shrink-0 pl-[6px] text-[12px] tracking-[0.4px]">
                {tabs.map((t, i) => (
                  <div key={i} className={`flex items-center h-[21px] shrink-0 bg-[#c8c8c8] ${t.w} ${t.gap}`}>
                    <TabGlyph />
                    <span className="flex-1 text-center pl-[7px] whitespace-nowrap">{t.name}</span>
                  </div>
                ))}
                <div className="flex items-center w-[139px] h-[22px] shrink-0 bg-[#f4f4f4] border-t-2 border-x border-t-[#e87878] border-x-[#c8c8c8] rounded-t-[3px]">
                  <TabGlyph />
                  <span className="flex-1 text-center pl-[7px] whitespace-nowrap tracking-[0.25px]">mod_5_counter</span>
                </div>
                <div className="flex-1" />
                <div className="flex items-center justify-center self-center w-[8px] h-[12px] bg-[#c00000] text-white text-[10px] font-bold leading-none mr-[1px]">›</div>
              </div>
              <div className="h-[6px] shrink-0 bg-white" />
              <div className="flex flex-1 min-h-0 pl-[11px]">
                <Canvas />
              </div>
              <div className="h-[5px] shrink-0 border-t border-[#888] bg-[#efefef]" />
            </div>
          </div>

          {/* status */}
          <div className="flex items-center h-[20px] shrink-0 pl-[3px] rounded-tl-[4px] border-b border-[#777] bg-linear-to-b from-[#dcdcdc] to-[#b4b4b4] text-[12px] tracking-[0.5px]">
            <Grip className="!h-[9px]" />
            <span className="ml-[5px]">mouse L:</span>
            <span className="ml-[608px]">M:</span>
            <div className="flex-1" />
            <span>R:</span>
          </div>
          <div className="flex items-center h-[22px] shrink-0 border-b border-[#666] bg-[#efefef] text-[12px] tracking-[0.5px]">
            <div className="flex items-center justify-center w-[30px] h-full bg-[#f8d8d8] border-r border-[#555] ml-[1px]">1(8)</div>
            <span className="ml-[10px] flex-1">VLSILab &gt;</span>
            <div className="w-[1px] h-full bg-[#555]" />
            <span className="ml-[9px] mr-[4px] tracking-[0.2px]">Cmd:</span>
          </div>
        </div>

        {/* window scrollbar */}
        <div className="flex flex-col w-[16px] shrink-0 bg-[#f0f0f0]">
          <div className="flex justify-center h-[78px] items-start pt-[7px]">
            <Svg w={8} h={5}>
              <path d="M.5 4.500L4 1l3.500 3.500" fill="none" stroke="#505050" strokeWidth="1.600" />
            </Svg>
          </div>
          <div className="flex-1 bg-[#cdcdcd]" />
          <div className="flex items-center justify-center h-[17px]">
            <Svg w={8} h={5}>
              <path d="M.5.5L4 4 7.500.5" fill="none" stroke="#505050" strokeWidth="1.600" />
            </Svg>
          </div>
        </div>
      </div>

      {/* bottom scrollbar */}
      <div className="flex items-center h-[17px] shrink-0 bg-[#f0f0f0]">
        <div className="flex items-center justify-center w-[17px]">
          <Svg w={5} h={8}>
            <path d="M4.500.5L1 4l3.500 3.500" fill="none" stroke="#505050" strokeWidth="1.600" />
          </Svg>
        </div>
        <div className="w-[1287px] h-full bg-[#cdcdcd]" />
        <div className="flex-1" />
        <Svg w={5} h={8} className="mr-[22px]">
          <path d="M.5.5L4 4 .5 7.500" fill="none" stroke="#505050" strokeWidth="1.600" />
        </Svg>
      </div>

      <Taskbar />
    </div>
  );
}
